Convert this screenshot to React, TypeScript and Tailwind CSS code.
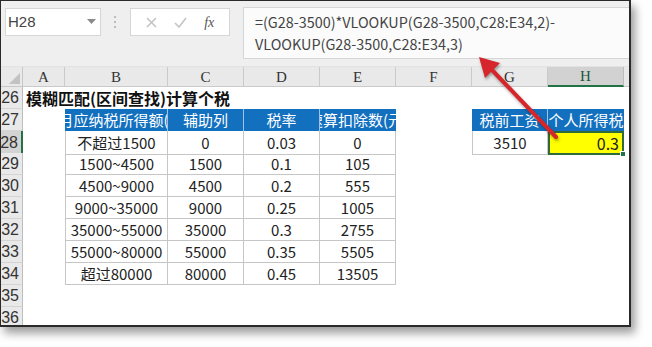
const cols = 'grid grid-cols-[22px_42px_103px_76px_76px_76px_76px_76px_76px_1fr]';
const cjk = "font-['Noto_Sans_CJK_SC','Noto_Sans',sans-serif]";

const rows = [
  ['不超过1500', '0', '0.03', '0'],
  ['1500~4500', '1500', '0.1', '105'],
  ['4500~9000', '4500', '0.2', '555'],
  ['9000~35000', '9000', '0.25', '1005'],
  ['35000~55000', '35000', '0.3', '2755'],
  ['55000~80000', '55000', '0.35', '5505'],
  ['超过80000', '80000', '0.45', '13505'],
];

function RowHead({ n, active }: { n: number; active?: boolean }) {
  return (
    <div
      className={`flex items-center justify-end overflow-hidden pr-[3px] border-b border-[#d4d4d4] text-[16px] text-[#333] font-['Liberation_Sans',sans-serif] ${
        active ? 'bg-[#d3d3d3] border-r-2 border-r-[#217346]' : 'bg-[#e9e9e9] border-r border-r-[#bdbdbd]'
      }`}
    >
      {n}
    </div>
  );
}

function Cell({ children, className = '' }: { children?: React.ReactNode; className?: string }) {
  return (
    <div className={`flex items-center justify-center overflow-hidden whitespace-nowrap ${className}`}>{children}</div>
  );
}

function FormulaBar() {
  return (
    <div className="h-[66px] flex items-start bg-[#efefef] border-b border-[#e2e2e2]">
      <div className="mt-[7px] ml-[4px] w-[96px] h-[28px] bg-white border border-[#d6d6d6] flex items-center justify-between pl-[2px] pr-[4px]">
        <span className="text-[15px] text-[#444] font-['Liberation_Sans',sans-serif]">H28</span>
        <svg width="9" height="6" viewBox="0 0 9 6">
          <path d="M0 0 L9 0 L4.5 5 Z" fill="#8a8a8a" />
        </svg>
      </div>
      <div className="mt-[15px] ml-[13px] flex flex-col gap-[3px]">
        <span className="w-[2px] h-[2px] bg-[#bcbcbc]" />
        <span className="w-[2px] h-[2px] bg-[#bcbcbc]" />
        <span className="w-[2px] h-[2px] bg-[#bcbcbc]" />
      </div>
      <div className="mt-[7px] ml-[14px] w-[100px] h-[28px] bg-white border border-[#d6d6d6] flex items-center justify-around px-[6px]">
        <svg width="11" height="11" viewBox="0 0 11 11">
          <path d="M1 1 L10 10 M10 1 L1 10" stroke="#c4c4c4" strokeWidth="1.6" />
        </svg>
        <svg width="13" height="11" viewBox="0 0 13 11">
          <path d="M1 6 L5 10 L12 1" stroke="#c4c4c4" strokeWidth="1.6" fill="none" />
        </svg>
        <span className="italic text-[14px] text-[#555] font-['Liberation_Serif',serif]">fx</span>
      </div>
      <div className={`mt-[6px] ml-[13px] flex-1 h-[52px] bg-[#fbfbfb] border border-[#d6d6d6] border-r-0 pl-[11px] pt-[3px] text-[14.4px] leading-[22px] text-[#444] ${cjk}`}>
        <div>=(G28-3500)*VLOOKUP(G28-3500,C28:E34,2)-</div>
        <div>VLOOKUP(G28-3500,C28:E34,3)</div>
      </div>
    </div>
  );
}

function ColumnHeader() {
  const letters = ['A', 'B', 'C', 'D', 'E', 'F', 'G', 'H'];
  return (
    <div className={`${cols} h-[20px] bg-[#e9e9e9] text-[15px] leading-[18px] font-['Liberation_Serif',serif]`}>
      <div className="relative border-r border-b border-[#c8c8c8]">
        <svg className="absolute right-[2px] bottom-[2px]" width="11" height="11" viewBox="0 0 11 11">
          <path d="M11 0 L11 11 L0 11 Z" fill="#c2c2c2" />
        </svg>
      </div>
      {letters.map((l) => (
        <Cell
          key={l}
          className={
            l === 'H'
              ? 'bg-[#d2d2d2] border-b-2 border-[#217346] text-[#20573a] border-r border-r-[#bdbdbd]'
              : 'border-r border-b border-[#cacaca] text-[#333]'
          }
        >
          {l}
        </Cell>
      ))}
      <div className="border-b border-[#cacaca]" />
    </div>
  );
}

export default function App() {
  const blue = 'bg-[#1370bf] text-white border-r border-r-[#9dc4e8]';
  const line = 'border-r border-b border-[#c6c6c6]';

  return (
    <div className="w-[652px] h-[347px] bg-white overflow-hidden">
      <div className="relative w-[631px] h-[327px] overflow-hidden bg-white border-t border-l border-[#2a2a2a] border-r-2 border-b-2 shadow-[4px_6px_9px_rgba(0,0,0,0.4)]">
        <FormulaBar />
        <ColumnHeader />
        <div className={`text-[15px] leading-[20px] text-[#222] ${cjk}`}>
          {/* row 26: title */}
          <div className={`${cols} h-[22px]`}>
            <RowHead n={26} />
            <div className="col-span-9 flex items-center pl-[3px] text-[16px] font-bold text-[#111]">
              模糊匹配(区间查找)计算个税
            </div>
          </div>
          {/* row 27: headers */}
          <div className={`${cols} h-[22px]`}>
            <RowHead n={27} />
            <div />
            <Cell className={blue}>每月应纳税所得额(元)</Cell>
            <Cell className={blue}>辅助列</Cell>
            <Cell className={blue}>税率</Cell>
            <Cell className="bg-[#1370bf] text-white">速算扣除数(元)</Cell>
            <div />
            <Cell className={blue}>税前工资</Cell>
            <Cell className="bg-[#1370bf] text-white">个人所得税</Cell>
            <div />
          </div>
          {rows.map((r, i) => (
            <div key={i} className={`${cols} h-[22px]`}>
              <RowHead n={28 + i} active={i === 0} />
              <div />
              <Cell className={`${line} border-l`}>{r[0]}</Cell>
              <Cell className={line}>{r[1]}</Cell>
              <Cell className={line}>{r[2]}</Cell>
              <Cell className={line}>{r[3]}</Cell>
              <div />
              {i === 0 ? (
                <>
                  <Cell className={`${line} border-l`}>3510</Cell>
                  <div className="relative bg-[#ffff00] border-2 border-[#2f6b3a] flex items-center justify-end pr-[3px] text-[16px]">
                    0.3
                    <span className="absolute -right-[4px] -bottom-[4px] w-[6px] h-[6px] bg-[#217346] border border-white" />
                  </div>
                </>
              ) : (
                <>
                  <div />
                  <div />
                </>
              )}
              <div />
            </div>
          ))}
          <div className={`${cols} h-[22px]`}>
            <RowHead n={35} />
          </div>
          <div className={`${cols} h-[22px]`}>
            <RowHead n={36} />
          </div>
        </div>
        <svg className="absolute inset-0 pointer-events-none" width="630" height="326" viewBox="0 0 630 326">
          <g style={{ filter: 'drop-shadow(1px 2px 1.5px rgba(0,0,0,0.35))' }}>
            <line x1="555" y1="136" x2="492" y2="70" stroke="#d4262b" strokeWidth="4" strokeLinecap="round" />
            <polygon points="478,56 499,62 484,77" fill="#d4262b" />
          </g>
        </svg>
      </div>
    </div>
  );
}
